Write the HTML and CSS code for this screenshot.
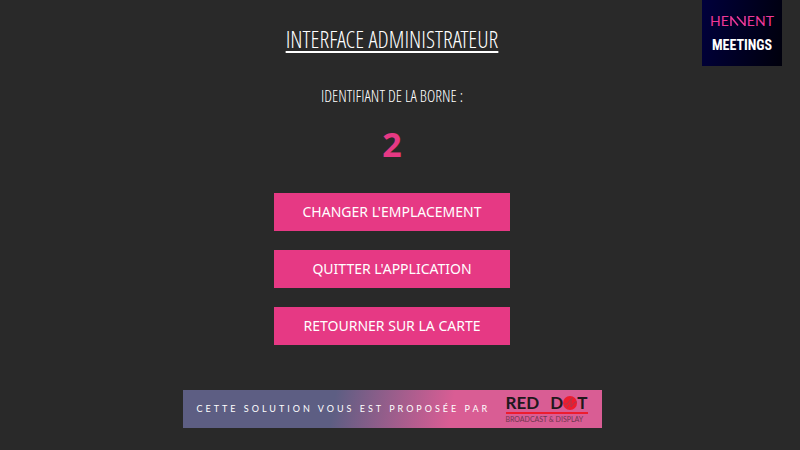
FILE: index.html
```html
<!DOCTYPE html>
<html lang="fr">
<head>
<meta charset="utf-8">
<meta name="viewport" content="width=device-width, initial-scale=1">
<title>Interface administrateur</title>
<link rel="stylesheet" href="styles.css">
</head>
<body>
<main class="panel">
  <h1 class="title">INTERFACE ADMINISTRATEUR</h1>
  <p class="label">IDENTIFIANT DE LA BORNE :</p>
  <p class="number">2</p>
  <div class="actions">
    <button class="action" type="button">CHANGER L'EMPLACEMENT</button>
    <button class="action" type="button">QUITTER L'APPLICATION</button>
    <button class="action" type="button">RETOURNER SUR LA CARTE</button>
  </div>
  <footer class="banner">
    <span class="credit">CETTE SOLUTION VOUS EST PROPOSÉE PAR</span>
    <span class="reddot">
      <span class="reddot-name"><span>RED</span><span class="reddot-word">D<svg class="dot" viewBox="0 0 14 14" aria-hidden="true"><circle cx="7" cy="7" r="7" fill="#ed1c2e"/><path d="M1 8h3l4-5v8l4-5h2M4 12l2-3M8 3l2-1" fill="none" stroke="#a8384f" stroke-width="1"/></svg>T</span></span>
      <span class="reddot-sub">BROADCAST &amp; DISPLAY</span>
    </span>
  </footer>
</main>
<aside class="brand">
  <span class="brand-top">HE<svg class="peaks" viewBox="0 0 18 10" aria-hidden="true"><path d="M2 10V1L9 9.500M8 0.500L16 9.500V0" fill="none" stroke="currentColor" stroke-width="1.500"/></svg>ENT</span>
  <span class="brand-bottom">MEETINGS</span>
</aside>
</body>
</html>
```
FILE: styles.css
```css
* { box-sizing: border-box; }
body {
  margin: 0;
  min-height: 100vh;
  background: #292929;
  color: #fff;
  font-family: "Noto Sans", sans-serif;
}
.panel {
  display: flex;
  flex-direction: column;
  align-items: center;
  padding: 22px 16px 0 0;
}
.title, .label {
  margin: 0;
  font-family: "Open Sans Condensed Light", "Open Sans Condensed", "Roboto Condensed", sans-serif;
  font-weight: 400;
}
.title {
  font-size: 23px;
  line-height: 34px;
  text-decoration: underline;
  text-decoration-thickness: 2px;
  text-underline-offset: 3px;
}
.label { margin-top: 28px; font-size: 16px; line-height: 24px; }
.number {
  margin: 14px 0 0;
  color: #e63984;
  font-family: "Open Sans", sans-serif;
  font-size: 34px;
  font-weight: 700;
  line-height: 44px;
}
.actions {
  display: grid;
  gap: 19px;
  width: 30%;
  min-width: 235px;
  margin-top: 27px;
}
.action {
  height: 38px;
  padding: 0;
  border: 0;
  background: #e63984;
  color: #fff;
  font: 14px/38px "Noto Sans", sans-serif;
}
.banner {
  display: flex;
  align-items: center;
  justify-content: space-between;
  height: 38px;
  width: 419px;
  margin-top: 45px;
  padding: 0 14px;
  background: linear-gradient(100deg, #5d5e83 36%, #d95d94 64%);
}
.credit { font: 9px/12px Lato, sans-serif; letter-spacing: 3px; white-space: nowrap; }
.reddot { display: flex; flex-direction: column; width: 82px; color: #20181c; }
.reddot-name {
  display: flex;
  justify-content: space-between;
  border-bottom: 2px solid #ed1c2e;
  font: 700 17px/18px Lato, sans-serif;
}
.reddot-word { display: flex; align-items: center; }
.dot { width: 14px; height: 14px; }
.reddot-sub { color: #70364f; font: 7px/10px Lato, sans-serif; white-space: nowrap; }
.brand {
  position: absolute;
  top: 0;
  right: 18px;
  display: flex;
  flex-direction: column;
  align-items: center;
  width: 80px;
  height: 66px;
  padding-top: 13px;
  background: linear-gradient(100deg, #00003c, #00000c);
}
.brand-top { color: #ee3897; font: 14px/16px Lato, sans-serif; }
.peaks { width: 18px; height: 10px; }
.brand-bottom { margin-top: 8px; font: 700 14px/16px "Roboto Condensed", sans-serif; }
```
